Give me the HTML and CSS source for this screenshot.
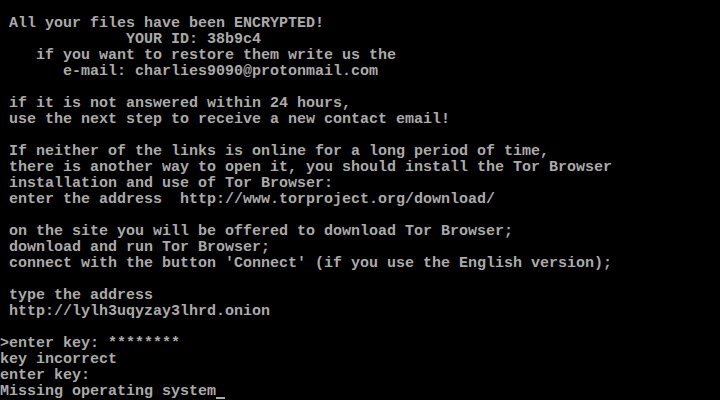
FILE: index.html
```html
<!DOCTYPE html>
<html lang="en">
<head>
    <meta charset="UTF-8">
    <meta name="viewport" content="width=device-width, initial-scale=1.0">
    <title>Missing operating system</title>
    <link rel="stylesheet" href="styles.css">
</head>
<body>
<pre class="screen">

 All your files have been ENCRYPTED!
              YOUR ID: 38b9c4
    if you want to restore them write us the
       e-mail: charlies9090@protonmail.com

 if it is not answered within 24 hours,
 use the next step to receive a new contact email!

 If neither of the links is online for a long period of time,
 there is another way to open it, you should install the Tor Browser
 installation and use of Tor Browser:
 enter the address  http://www.torproject.org/download/

 on the site you will be offered to download Tor Browser;
 download and run Tor Browser;
 connect with the button 'Connect' (if you use the English version);

 type the address
 http://lylh3uqyzay3lhrd.onion

&gt;enter key: ********
key incorrect
enter key:
Missing operating system<span class="cursor"></span></pre>
</body>
</html>
```

FILE: styles.css
```css
html, body {
    margin: 0;
    padding: 0;
    background: #000000;
}

body {
    width: 720px;
    height: 400px;
    overflow: hidden;
}

.screen {
    margin: 0;
    padding: 0;
    color: #aaaaaa;
    font-family: 'Liberation Mono', 'DejaVu Sans Mono', monospace;
    font-size: 15px;
    font-weight: bold;
    line-height: 16px;
    white-space: pre;
}

/* blinking text-mode cursor */
.cursor {
    display: inline-block;
    width: 9px;
    height: 2px;
    margin-top: 13px;
    vertical-align: top;
    background: #aaaaaa;
}
```
